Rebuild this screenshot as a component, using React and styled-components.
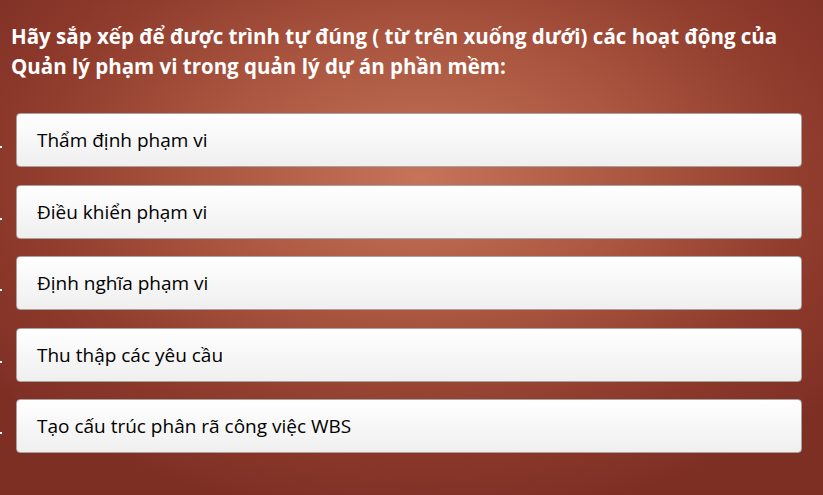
import styled, { createGlobalStyle } from 'styled-components';

const GlobalStyle = createGlobalStyle`
  html, body {
    margin: 0;
    padding: 0;
  }
  body {
    width: 823px;
    height: 495px;
    overflow: hidden;
    font-family: "Open Sans", "Noto Sans", sans-serif;
  }
`

const steps = [
  'Thẩm định phạm vi',
  'Điều khiển phạm vi',
  'Định nghĩa phạm vi',
  'Thu thập các yêu cầu',
  'Tạo cấu trúc phân rã công việc WBS',
];

const App = () => {
  return (
    <Slide>
      <GlobalStyle />
      <Question>
        Hãy sắp xếp để được trình tự đúng ( từ trên xuống dưới) các hoạt động của
        Quản lý phạm vi trong quản lý dự án phần mềm:
      </Question>
      <StepList>
        {steps.map((s) => (
          <Step key={s}>
            <Card>{s}</Card>
          </Step>
        ))}
      </StepList>
    </Slide>
  )
};

const Slide = styled.div`
width: 823px;
height: 495px;
box-sizing: border-box;
padding: 21px 0 0 0;
background: radial-gradient(ellipse 540px 340px at 420px 178px, #c5745a 0%, #aa5640 40%, #8e3a2c 75%, #7e2f24 100%);
`
const Question = styled.div`
margin: 0 0 0 11px;
color: #ffffff;
font-size: 20.5px;
font-weight: 700;
line-height: 30px;
width: 795px;
`
const StepList = styled.ol`
list-style: none;
margin: 32px 0 0 0;
padding: 0;
display: flex;
flex-direction: column;
gap: 17.5px;
`
const Step = styled.li`
display: flex;
align-items: center;
position: relative;
padding-left: 16px;
&::before {
  content: '';
  position: absolute;
  left: 0;
  top: 33px;
  width: 2px;
  height: 2px;
  background: #ffffff;
}
`
const Card = styled.div`
box-sizing: border-box;
width: 786px;
height: 54px;
display: flex;
align-items: center;
padding-left: 20px;
border: 1px solid #a9a0a0;
border-radius: 4px;
background: linear-gradient(#ffffff, #efefef);
color: #000000;
font-size: 19px;
`

export default App;
